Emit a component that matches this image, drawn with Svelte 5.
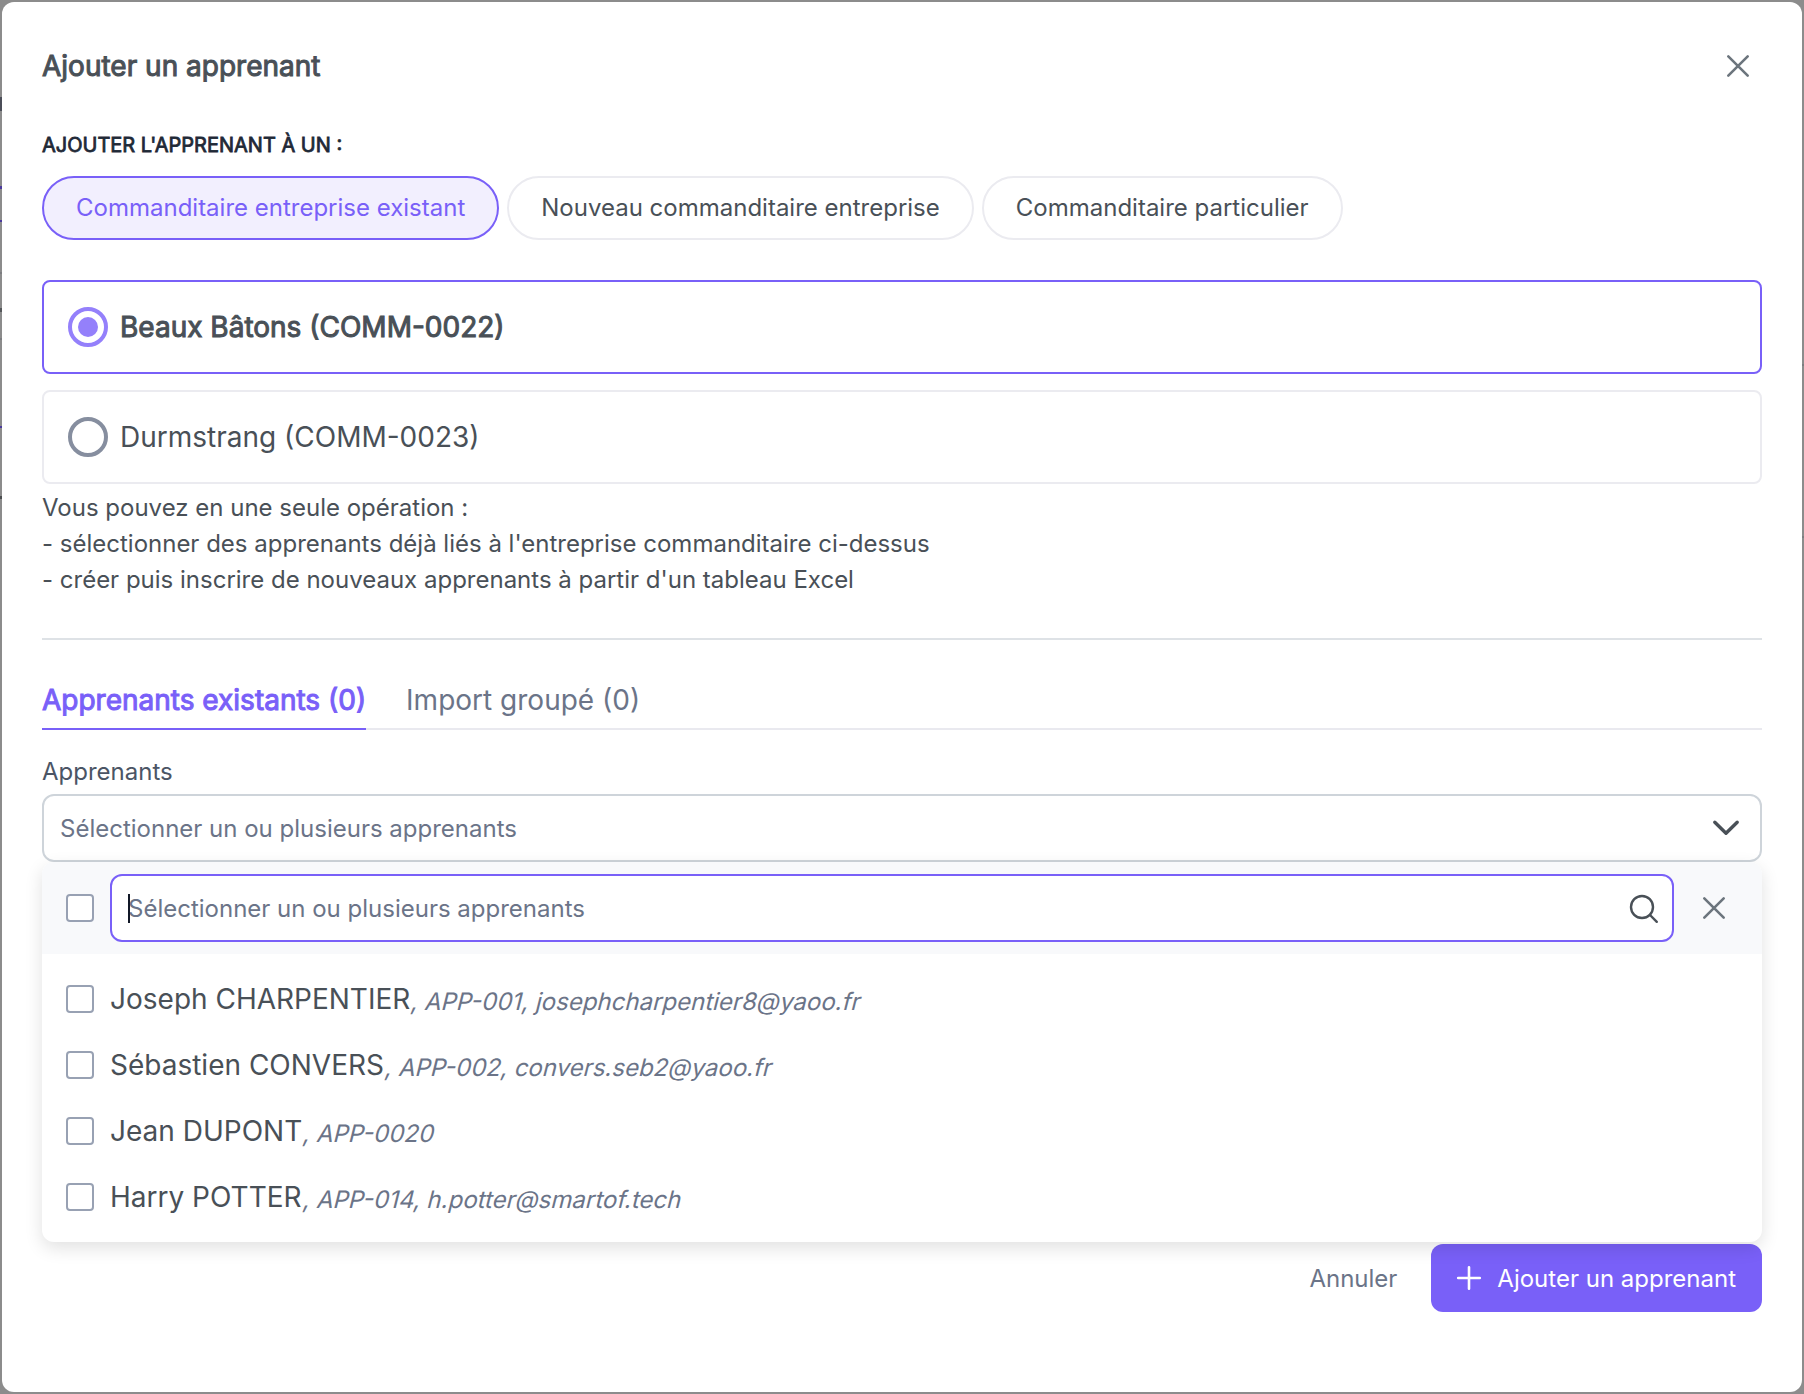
<script lang="ts">
    interface Learner {
        name: string
        details: string
    }

    const modes = ['Commanditaire entreprise existant', 'Nouveau commanditaire entreprise', 'Commanditaire particulier']
    const sponsors = ['Beaux Bâtons (COMM-0022)', 'Durmstrang (COMM-0023)']
    const learners: Array<Learner> = [
        { name: 'Joseph CHARPENTIER', details: ', APP-001, josephcharpentier8@yaoo.fr' },
        { name: 'Sébastien CONVERS', details: ', APP-002, convers.seb2@yaoo.fr' },
        { name: 'Jean DUPONT', details: ', APP-0020' },
        { name: 'Harry POTTER', details: ', APP-014, h.potter@smartof.tech' }
    ]

    let mode = $state(0)
    let sponsor = $state(0)
    let tab = $state(0)
</script>

<div class="backdrop">
    <div class="modal">
        <header>
            <h1>Ajouter un apprenant</h1>
            <button class="icon-button" aria-label="Fermer">
                <svg width="26" height="26" viewBox="0 0 26 26"><path d="M3.3 3.3l19.4 19.4M22.7 3.3L3.3 22.7" /></svg>
            </button>
        </header>

        <h2>AJOUTER L'APPRENANT À UN :</h2>
        <div class="pills">
            {#each modes as label, i}
                <button class="pill" class:active={mode === i} onclick={() => (mode = i)}>{label}</button>
            {/each}
        </div>

        <div class="sponsors">
            {#each sponsors as label, i}
                <button class="sponsor" class:active={sponsor === i} onclick={() => (sponsor = i)}>
                    <span class="radio"></span>
                    <span class="sponsor-name">{label}</span>
                </button>
            {/each}
        </div>

        <p class="help">
            Vous pouvez en une seule opération :<br />
            - sélectionner des apprenants déjà liés à l'entreprise commanditaire ci-dessus<br />
            - créer puis inscrire de nouveaux apprenants à partir d'un tableau Excel
        </p>

        <div class="divider"></div>

        <nav class="tabs">
            <button class="tab" class:active={tab === 0} onclick={() => (tab = 0)}>Apprenants existants (0)</button>
            <button class="tab" class:active={tab === 1} onclick={() => (tab = 1)}>Import groupé (0)</button>
        </nav>

        <div class="label">Apprenants</div>
        <div class="select">
            <span>Sélectionner un ou plusieurs apprenants</span>
            <svg class="chevron" width="28" height="28" viewBox="0 0 28 28"><path d="M2.8 8.2L14 19.2 25.2 8.2" /></svg>
        </div>

        <div class="panel">
            <div class="panel-header">
                <span class="checkbox"></span>
                <div class="search">
                    <span class="caret"></span>
                    <span class="placeholder">Sélectionner un ou plusieurs apprenants</span>
                    <svg class="magnifier" width="32" height="32" viewBox="0 0 32 32">
                        <circle cx="14" cy="15" r="11" />
                        <path d="M22 23l6.8 6.8" />
                    </svg>
                </div>
                <button class="icon-button" aria-label="Effacer">
                    <svg width="26" height="26" viewBox="0 0 26 26"><path d="M3.3 3.3l19.4 19.4M22.7 3.3L3.3 22.7" /></svg>
                </button>
            </div>
            <ul>
                {#each learners as learner}
                    <li>
                        <span class="checkbox"></span>
                        <span class="learner"><span class="name">{learner.name}</span><span class="details">{learner.details}</span></span>
                    </li>
                {/each}
            </ul>
        </div>

        <footer>
            <button class="cancel">Annuler</button>
            <button class="submit">
                <svg width="26" height="26" viewBox="0 0 26 26"><path d="M13 2.2v21.6M2.2 13h21.6" /></svg>
                <span>Ajouter un apprenant</span>
            </button>
        </footer>
    </div>
</div>

<style>
    :global(body) {
        margin: 0;
        background: #8c8c8c;
    }
    .backdrop {
        box-sizing: border-box;
        height: 1394px;
        padding: 2px;
        /* edges of the dimmed page that stay visible beside the modal */
        background:
            linear-gradient(#4b4e58, #4b4e58) 0 97px / 2px 14px no-repeat,
            linear-gradient(#4a3a9c, #4a3a9c) 0 186px / 2px 3px no-repeat,
            linear-gradient(#4a3a9c, #4a3a9c) 0 220px / 2px 2px no-repeat,
            linear-gradient(#7c7d80, #7c7d80) 0 272px / 2px 2px no-repeat,
            linear-gradient(#55575a, #55575a) 0 308px / 2px 4px no-repeat,
            linear-gradient(#7c7d80, #7c7d80) 0 338px / 2px 2px no-repeat,
            linear-gradient(#4a3a9c, #4a3a9c) 0 426px / 2px 2px no-repeat,
            linear-gradient(#4b4e50, #4b4e50) 0 496px / 2px 3px no-repeat,
            linear-gradient(#7c7d80, #7c7d80) 100% 364px / 2px 2px no-repeat,
            linear-gradient(#7c7d80, #7c7d80) 100% 536px / 2px 2px no-repeat,
            #8c8c8c;
        font-family: Inter, sans-serif;
        font-size: 24px;
        font-optical-sizing: none;
        color: #495057;
    }
    .modal {
        box-sizing: border-box;
        display: flex;
        flex-direction: column;
        height: 1390px;
        padding: 40px;
        border-radius: 12px;
        background: #fff;
    }
    button {
        box-sizing: border-box;
        margin: 0;
        padding: 0;
        border: 0;
        background: none;
        color: inherit;
        font: inherit;
        font-optical-sizing: inherit;
        letter-spacing: inherit;
        cursor: pointer;
    }
    svg {
        display: block;
        flex: none;
        fill: none;
        stroke: currentColor;
        stroke-width: 2.6;
        stroke-linecap: round;
        stroke-linejoin: round;
    }
    header {
        display: flex;
        align-items: center;
        justify-content: space-between;
        height: 48px;
        padding-right: 11px;
    }
    h1 {
        margin: 0;
        font-size: 28px;
        font-weight: 400;
        -webkit-text-stroke: 1px;
        color: #495057;
    }
    .icon-button {
        color: #6c757d;
    }
    h2 {
        margin: 40px 0 0;
        height: 46px;
        font-size: 20px;
        font-weight: 400;
        -webkit-text-stroke: 0.8px;
        line-height: 30px;
        color: #1f2937;
    }
    .pills {
        display: flex;
        gap: 8px;
    }
    .pill {
        height: 64px;
        padding: 0 32px 2px;
        border: 2px solid #ebebf0;
        border-radius: 32px;
        white-space: nowrap;
    }
    .pill.active {
        border-color: #7960f8;
        background: #f2effe;
        color: #7960f8;
    }
    .sponsors {
        display: flex;
        flex-direction: column;
        gap: 16px;
        margin-top: 40px;
    }
    .sponsor {
        display: flex;
        align-items: center;
        gap: 12px;
        height: 94px;
        padding: 0 24px;
        border: 2px solid #ebebf0;
        border-radius: 8px;
        font-size: 28px;
    }
    .sponsor.active {
        border-color: #7960f8;
        -webkit-text-stroke: 1px;
    }
    .radio {
        box-sizing: border-box;
        display: grid;
        place-items: center;
        width: 40px;
        height: 40px;
        border: 4px solid #868e9f;
        border-radius: 50%;
    }
    .active .radio {
        border-color: #9480fb;
    }
    .active .radio::after {
        content: '';
        width: 20px;
        height: 20px;
        border-radius: 50%;
        background: #9480fb;
    }
    .help {
        margin: 6px 0 0;
        line-height: 36px;
    }
    .divider {
        height: 2px;
        margin-top: 40px;
        background: #dee2e6;
    }
    .tabs {
        display: flex;
        gap: 40px;
        height: 62px;
        margin-top: 28px;
        box-shadow: inset 0 -2px #e9e9ef;
        font-size: 28px;
        color: #6b7488;
    }
    .tab {
        padding-top: 3px;
        border-bottom: 2px solid transparent;
        white-space: nowrap;
    }
    .tab.active {
        border-color: #7960f8;
        color: #7960f8;
        -webkit-text-stroke: 1px;
    }
    .label {
        margin-top: 24px;
        height: 40px;
        line-height: 36px;
        color: #4b5565;
    }
    .select,
    .search {
        box-sizing: border-box;
        display: flex;
        align-items: center;
        height: 68px;
        padding: 0 16px;
        border: 2px solid #ced4da;
        border-radius: 12px;
        background: #fff;
        color: #6b7488;
    }
    .select {
        flex: none;
        justify-content: space-between;
        padding-right: 20px;
    }
    .chevron {
        stroke-width: 3.4;
        color: #495057;
    }
    .panel {
        position: relative;
        z-index: 1;
        flex: none;
        height: 380px;
        border-radius: 12px;
        background: #fff;
        box-shadow: 0 6px 18px rgba(0, 0, 0, 0.12);
    }
    .panel-header {
        box-sizing: border-box;
        display: flex;
        align-items: center;
        height: 92px;
        padding: 0 35px 0 24px;
        border-radius: 12px 12px 0 0;
        background: #f8f9fb;
    }
    .search {
        position: relative;
        flex: 1;
        margin: 0 27px 0 16px;
        padding-right: 12px;
        border-color: #7960f8;
    }
    .caret {
        position: absolute;
        left: 16px;
        width: 2px;
        height: 29px;
        background: #111827;
    }
    .placeholder {
        flex: 1;
    }
    .magnifier {
        stroke-width: 2.4;
        color: #495057;
    }
    .checkbox {
        box-sizing: border-box;
        flex: none;
        width: 28px;
        height: 28px;
        border: 2px solid #98a1b3;
        border-radius: 4px;
        background: #fff;
    }
    ul {
        list-style: none;
        margin: 0;
        padding: 12px 24px;
    }
    li {
        display: flex;
        align-items: center;
        gap: 16px;
        height: 66px;
    }
    .learner {
        display: flex;
        align-items: center;
        white-space: pre;
    }
    .name {
        font-size: 28px;
    }
    .details {
        padding-top: 4px;
        transform: skewX(-14deg);
        transform-origin: 0 27px;
        color: #6b7488;
    }
    footer {
        display: flex;
        align-items: center;
        justify-content: flex-end;
        gap: 34px;
        margin-top: 2px;
    }
    .cancel {
        color: #6b7488;
    }
    .submit {
        display: flex;
        align-items: center;
        gap: 15px;
        height: 68px;
        padding: 0 26px 0 25px;
        border-radius: 12px;
        background: #7960f8;
        color: #fff;
    }
</style>
